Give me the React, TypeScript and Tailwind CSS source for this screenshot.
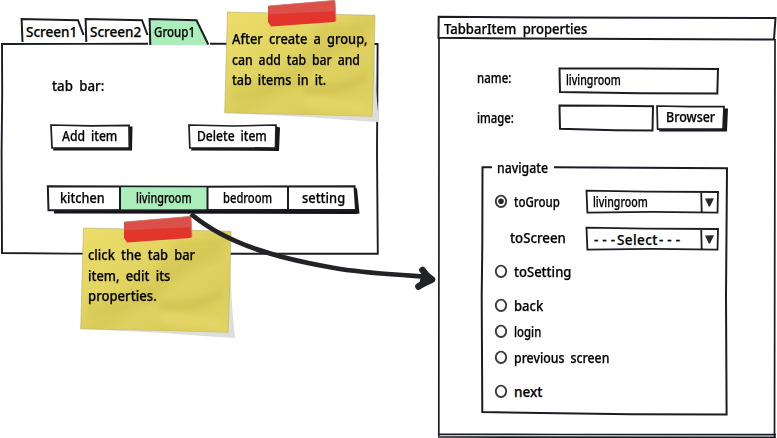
import React, { useLayoutEffect, useRef, useState } from "react";

const INK = "#1c1c24";

/**
 * A single line of lettering that fills the given width: wide word gaps,
 * then looser letters if there is room, or slimmer letters if there is not.
 */
function Line({ w, children }: { w: number; children: string }) {
  const ref = useRef<HTMLSpanElement>(null);
  const [fit, setFit] = useState({ spacing: 0, scale: 1 });
  useLayoutEffect(() => {
    if (!ref.current) return;
    const natural = ref.current.offsetWidth - fit.spacing * children.length;
    if (natural > w) setFit({ spacing: 0, scale: w / natural });
    else setFit({ spacing: (w - natural) / (children.length - 1), scale: 1 });
  }, [w, children]);
  return (
    <span className="block h-5 whitespace-pre leading-5" style={{ width: w }}>
      <span
        ref={ref}
        className="inline-block origin-left [word-spacing:3px]"
        style={{ letterSpacing: fit.spacing, transform: `scaleX(${fit.scale})` }}
      >
        {children}
      </span>
    </span>
  );
}

/** Hand-drawn outline laid over a box; coordinates are relative to the box. */
function Stroke({ d, shadow, width = 2 }: { d: string; shadow?: string; width?: number }) {
  return (
    <svg className="pointer-events-none absolute inset-0 size-full overflow-visible" fill="none">
      {shadow && <path d={shadow} fill="#17171c" />}
      <path d={d} stroke={INK} strokeWidth={width} strokeLinejoin="miter" fill={shadow ? "#fff" : "none"} />
    </svg>
  );
}

function Button({ className, label, w, d, shadow }: { className: string; label: string; w: number; d: string; shadow: string }) {
  return (
    <button className={"relative flex h-6 shrink-0 items-start pt-0.5 " + className}>
      <Stroke d={d} shadow={shadow} width={1.7} />
      <span className="relative">
        <Line w={w}>{label}</Line>
      </span>
    </button>
  );
}

function Tab({ label, w, outline, fill, className }: { label: string; w: number; outline: string; fill?: string; className: string }) {
  return (
    <div className={"relative h-[27px] shrink-0 pl-[5px] pt-1 " + className}>
      <svg className="absolute inset-0 size-full overflow-visible">
        {fill && <path d={fill} fill="#abeebb" />}
        <path d={outline} fill="none" stroke={INK} strokeWidth="2" />
      </svg>
      <div className="relative">
        <Line w={w}>{label}</Line>
      </div>
    </div>
  );
}

function Select({ pad, children }: { pad: string; children: React.ReactNode }) {
  return (
    <div className={"relative flex h-[22px] w-[132px] shrink-0 " + pad}>
      <Stroke d="M0.5 -0.3L60 0.6L132 1L131.5 21.6L66 20.9L1.4 21.6Z M115.2 1L115.7 21.5" width={1.8} />
      <svg className="absolute left-[118px] top-[7px] h-2.5 w-3">
        <path d="M1 0.6L10 0.3L6 8.6L4.7 8.6Z" fill="#292930" />
      </svg>
      {children}
    </div>
  );
}

function Radio({ label, w, checked, className }: { label: string; w: number; checked?: boolean; className: string }) {
  return (
    <label className={"flex h-5 items-center " + className}>
      <svg className="mr-[6px] h-[14px] w-[14px] shrink-0 overflow-visible">
        <ellipse cx="7" cy="6.3" rx="5.2" ry="5.7" fill="none" stroke="#3a3a43" strokeWidth="1.9" />
        {checked && <circle cx="7" cy="6.3" r="2.8" fill="#292930" />}
      </svg>
      <Line w={w}>{label}</Line>
    </label>
  );
}

function Note({ id, className, lines }: { id: string; className: string; lines: [string, number][] }) {
  return (
    <div className={"absolute h-[124px] w-[156px] " + className}>
      <svg className="absolute inset-0 size-full overflow-visible">
        <defs>
          <linearGradient id={id} x1="0" y1="0" x2="1" y2="1">
            <stop offset="0" stopColor="#ecde68" />
            <stop offset="0.4" stopColor="#e2d462" />
            <stop offset="0.53" stopColor="#d8cb59" />
            <stop offset="0.62" stopColor="#dfd160" />
            <stop offset="0.76" stopColor="#dacd5b" />
            <stop offset="1" stopColor="#e1d461" />
          </linearGradient>
          <filter id={id + "-crease"}>
            <feGaussianBlur stdDeviation="2.5" />
          </filter>
        </defs>
        <path d="M2 113L148 117L151 45L153 90L156 122L138 121L85 117Z" fill="#deded8" />
        <path d="M4.5 12L152 15.3Q151 70 149 116.5L76 114.5L1.7 112.8Z" fill={`url(#${id})`} stroke="#b5ad70" strokeWidth="0.6" />
        <g filter={`url(#${id}-crease)`}>
          <path d="M8 82L40 77L79 71L80 87L50 93L22 101L8 104Z" fill="#d0c350" opacity="0.4" />
          <path d="M80 84L115 83L144 74L144 83L112 94L80 95Z" fill="#cabd4c" opacity="0.45" />
          <path d="M98 24L145 24L144 46L104 54L82 72L78 52Z" fill="#d1c450" opacity="0.35" />
          <path d="M82 96L108 98L143 103L142 111L82 109Z" fill="#e9dc70" opacity="0.5" />
        </g>
        <path d="M45 6L112 0.3L113 21L111 22L48 26.5L45 22Z" fill="#e2352b" />
        <path d="M45 6L112 0.3L112.5 11.5L81 12.5L45 14.5Z" fill="#db5149" />
        <path d="M45 6L112 0.3L113 21" fill="none" stroke="#c78a80" strokeWidth="0.7" />
      </svg>
      <div className="relative flex flex-col gap-[0.5px] pl-[9px] pt-[29px]">
        {lines.map(([text, w]) => (
          <Line key={text} w={w}>{text}</Line>
        ))}
      </div>
    </div>
  );
}

function Cell({ label, w, className }: { label: string; w: number; className: string }) {
  return (
    <div className={"flex h-full shrink-0 justify-center pt-[3px] " + className}>
      <Line w={w}>{label}</Line>
    </div>
  );
}

export default function App() {
  return (
    <main className="relative flex h-[438px] w-[777px] overflow-hidden bg-white font-['Noto_Sans','Open_Sans',sans-serif] text-[13.5px] font-medium text-black [-webkit-text-stroke:0.25px_black]">
      <section className="w-[438px] shrink-0 pt-[18px]">
        <div className="relative z-10 flex pl-[21px]">
          <Tab className="w-16" label="Screen1" w={51} outline="M1.5 24L0.6 1L57 2.2L62.5 17" />
          <Tab className="w-16" label="Screen2" w={51} outline="M1.3 24L0.6 1L57 2.2L62.5 17" />
          <Tab className="w-[61px]" label="Group1" w={41} fill="M0 1L48 2L60 27H0Z" outline="M1.3 27L0.6 1L47.5 2.2L59.3 26.5" />
        </div>
        <div className="relative -mt-0.5 h-[212px] w-[379px] pt-[33px]">
          <Stroke d="M148 0.8L80 0.9L2 1L2.2 50L1.6 110L2 210L70 210.6L377.8 210.8L377 110L377.6 1L210 0.8" width={1.9} />
          <div className="pl-[52px]">
            <Line w={52}>tab bar:</Line>
          </div>
          <div className="mt-7 flex pl-[51px]">
            <Button className="w-[78px] pl-[11px]" label="Add item" w={55}
              d="M0 1L40 1.8L78 1.3L78.3 24L1 23.9Z" shadow="M3 22.5L2 26.5L81 26.5L81.5 2.5L78 2.5V22.5Z" />
            <Button className="ml-[60px] w-[87px] pl-2" label="Delete item" w={70}
              d="M0 1L45 2L87 1L86.5 24L0.8 23.9Z" shadow="M3 22.5L2 26.5L90 27L91 3.5L87 2.5V22.5Z" />
          </div>
          <div className="relative ml-[47px] mt-[37px] flex h-[26px] w-[309px]">
            <svg className="absolute inset-0 size-full overflow-visible">
              <path d="M7 22V28.5L309 29L312.5 28.5L310 3.5L306 2.5V23.5Z" fill="#14151b" />
              <path d="M0.8 1.3L155 1.7L307.5 1.3L309 25L1.5 25.3Z" fill="#fff" stroke={INK} strokeWidth="2" />
              <path d="M73 2.5H160V24.2H73Z" fill="#abeebb" />
              <path d="M73 1V27M160.5 1V27M241 1V27" stroke={INK} strokeWidth="2" />
            </svg>
            <div className="relative flex">
              <Cell className="w-[70px]" label="kitchen" w={45} />
              <Cell className="ml-[3px] w-[87px]" label="livingroom" w={56} />
              <Cell className="w-[81px]" label="bedroom" w={49} />
              <Cell className="w-[70px] pl-px" label="setting" w={43} />
            </div>
          </div>
        </div>
      </section>

      <section className="relative mt-4 h-[422px] w-[339px] shrink-0">
        <Stroke d="M0.7 0.8L110 1.4L337.5 2L336.8 12L336 23.5L80 22.5L0.5 21.8Z" width={2} />
        <Stroke d="M1 22L0.8 420M337 23L336.5 422M0 418.3L120 418.5L338 418.7M0 421L338 421.4" width={1.7} />
        <h1 className="pl-1.5 pt-[3px]">
          <Line w={143}>TabbarItem properties</Line>
        </h1>
        <div className="mt-[29px] flex pl-[39px]">
          <div className="w-[83px] shrink-0">
            <Line w={34}>name:</Line>
          </div>
          <div className="relative h-[25px] w-[158px] pl-[6px] pt-0.5">
            <Stroke d="M-0.5 0.4L80 0.6L158 1.1L157.3 25.5L80 25.2L0 24Z" />
            <Line w={55}>livingroom</Line>
          </div>
        </div>
        <div className="mt-[12px] flex pl-[39px]">
          <div className="mt-[3px] w-[83px] shrink-0">
            <Line w={37}>image:</Line>
          </div>
          <div className="relative h-[25px] w-[93px]">
            <Stroke d="M-0.5 0.4L50 0.8L93 1.3L92.5 25.5L55 25.2L0 23.7Z" />
          </div>
          <Button className="ml-1 w-[67px] pl-[9px]" label="Browser" w={49}
            d="M0 1L34 1.7L67 1.7L66 24L0.6 24.2Z" shadow="M3 22.5L2 26.5L70 26.5L71 3.5L67 3.5V22.5Z" />
        </div>

        <div className="relative ml-[43px] mt-[36px] flow-root h-[248px] w-[247px]">
          <Stroke d="M11 1.2L1.5 1.2L1.3 80L0.7 130L1.3 246L60 247L150 248.2L245.6 248.5L245 130L246 2.2L73 1.2" />
          <div className="-mt-2 ml-4">
            <Line w={51}>navigate</Line>
          </div>
          <div className="flex pl-[13px] pt-[13px]">
            <Radio className="mt-px w-[92px]" label="toGroup" w={46} checked />
            <Select pad="pl-[7px] pt-px">
              <Line w={55}>livingroom</Line>
            </Select>
          </div>
          <div className="mt-[15px] flex pl-[29px]">
            <div className="w-[76px]">
              <Line w={56}>toScreen</Line>
            </div>
            <Select pad="gap-[2px] pl-2 pt-0.5">
              <Line w={21}>---</Line>
              <Line w={40}>Select</Line>
              <Line w={21}>---</Line>
            </Select>
          </div>
          <div className="flex flex-col pl-[13px] pt-3">
            <Radio className="" label="toSetting" w={57} />
            <Radio className="mt-3.5" label="back" w={29} />
            <Radio className="mt-1.5" label="login" w={27} />
            <Radio className="mt-1.5" label="previous screen" w={95} />
            <Radio className="mt-3.5" label="next" w={28} />
          </div>
        </div>
      </section>

      <Note id="paper-a" className="left-[223px] top-0 z-20"
        lines={[["After create a group,", 136], ["can add tab bar and", 128], ["tab items in it.", 94]]} />
      <Note id="paper-b" className="left-[79px] top-[216px] z-20"
        lines={[["click the tab bar", 107], ["item, edit its", 82], ["properties.", 69]]} />
      <svg className="pointer-events-none absolute left-[180px] top-[205px] z-30 h-[90px] w-[260px] overflow-visible" fill="none" stroke="#222326">
        <path d="M11 9C48 40 100 54 160 64C190 68.5 222 70 245 71.5" strokeWidth="4.8" />
        <path d="M242.5 65C245 69 248 72 252 74.5C247 77 242 79 238.5 81.5" fill="#222326" strokeWidth="6.6" strokeLinecap="round" strokeLinejoin="round" />
      </svg>
    </main>
  );
}
